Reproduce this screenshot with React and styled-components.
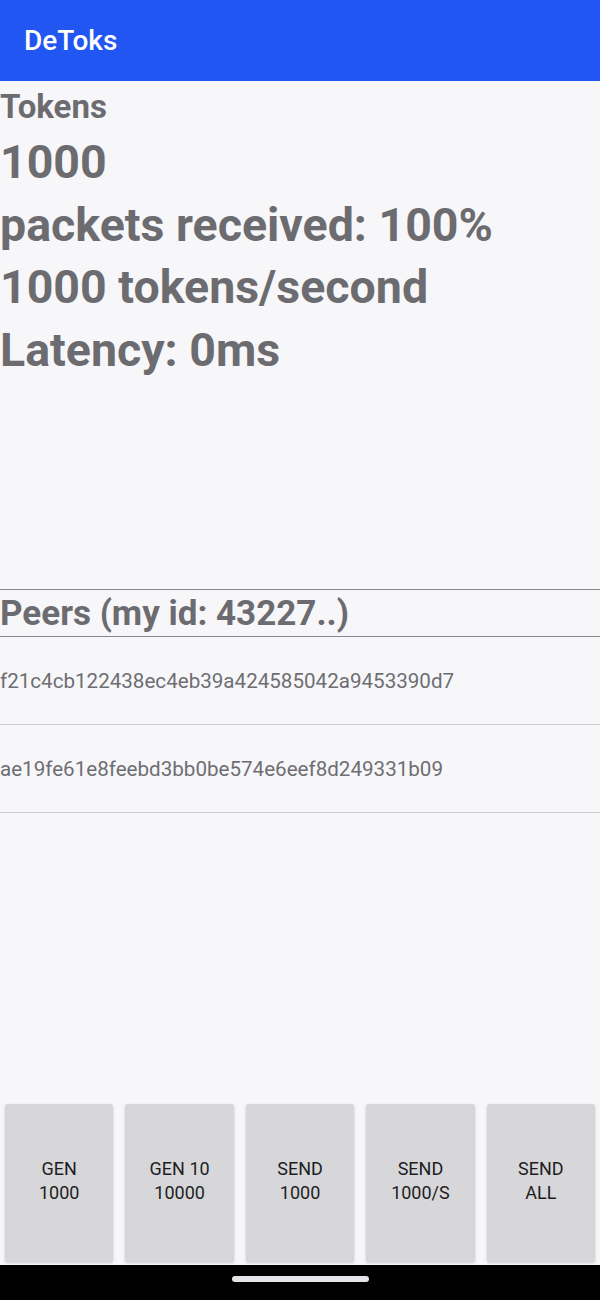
import React from "react"
import styled, { createGlobalStyle } from "styled-components"

const GlobalStyle = createGlobalStyle`
    html, body {
        margin: 0;
        padding: 0;
        background: #f7f7fa;
    }
    * {
        box-sizing: border-box;
    }
`

const Screen = styled.div`
    width: 600px;
    height: 1300px;
    display: flex;
    flex-direction: column;
    background: #f7f7fa;
    font-family: Roboto, "Liberation Sans", sans-serif;
    overflow: hidden;
`

const AppBar = styled.header`
    height: 81px;
    flex-shrink: 0;
    display: flex;
    align-items: center;
    padding-left: 24px;
    background: #2156f3;
    color: #ffffff;
    font-size: 28px;
    font-weight: 500;
`

const Stats = styled.section`
    height: 509px;
    flex-shrink: 0;
    padding-top: 6px;
    border-bottom: 1px solid #8a8a8e;
    color: #6c6c70;
    font-weight: 700;
    white-space: nowrap;
`

const Label = styled.div`
    font-size: 33px;
    line-height: 40px;
`

const BigLine = styled.div`
    font-size: 46.5px;
    line-height: 62.5px;
    margin-top: ${p => (p.$first ? "4px" : "0")};
`

const PeersTitle = styled.h2`
    margin: 0;
    height: 47px;
    flex-shrink: 0;
    display: flex;
    align-items: center;
    font-size: 35px;
    font-weight: 700;
    color: #6c6c70;
    border-bottom: 1px solid #8a8a8e;
`

const PeerRow = styled.div`
    height: 88px;
    flex-shrink: 0;
    display: flex;
    align-items: center;
    font-size: 20.6px;
    color: #6e6e72;
    border-bottom: 1px solid #d0d0d4;
`

const Spacer = styled.div`
    flex: 1;
`

const ButtonBar = styled.div`
    display: flex;
    gap: 12px;
    padding: 0 5px 3px;
    flex-shrink: 0;
`

const ActionButton = styled.button`
    flex: 1;
    height: 158px;
    border: none;
    border-radius: 3px;
    background: #d7d7da;
    box-shadow: 0 1px 3px rgba(0, 0, 0, 0.18);
    font-family: Roboto, "Liberation Sans", sans-serif;
    font-size: 18px;
    line-height: 24px;
    color: #1d1d1f;
    text-transform: uppercase;
    padding: 0 0 4px;
`

const NavBar = styled.div`
    height: 35px;
    flex-shrink: 0;
    background: #000000;
    display: flex;
    justify-content: center;
    padding-top: 11px;
`

const Handle = styled.div`
    width: 137px;
    height: 6px;
    border-radius: 3px;
    background: #e4e4e8;
`

const peers = [
    "f21c4cb122438ec4eb39a424585042a9453390d7",
    "ae19fe61e8feebd3bb0be574e6eef8d249331b09",
]

const actions = [
    ["GEN", "1000"],
    ["GEN 10", "10000"],
    ["SEND", "1000"],
    ["SEND", "1000/S"],
    ["SEND", "ALL"],
]

const App = () => {
    return (
        <>
            <GlobalStyle />
            <Screen>
                <AppBar>DeToks</AppBar>
                <Stats>
                    <Label>Tokens</Label>
                    <BigLine $first>1000</BigLine>
                    <BigLine>packets received: 100%</BigLine>
                    <BigLine>1000 tokens/second</BigLine>
                    <BigLine>Latency: 0ms</BigLine>
                </Stats>
                <PeersTitle>Peers (my id: 43227..)</PeersTitle>
                {peers.map(id => (
                    <PeerRow key={id}>{id}</PeerRow>
                ))}
                <Spacer />
                <ButtonBar>
                    {actions.map(([top, bottom], i) => (
                        <ActionButton key={i}>
                            {top}
                            <br />
                            {bottom}
                        </ActionButton>
                    ))}
                </ButtonBar>
                <NavBar>
                    <Handle />
                </NavBar>
            </Screen>
        </>
    )
}

export default App
